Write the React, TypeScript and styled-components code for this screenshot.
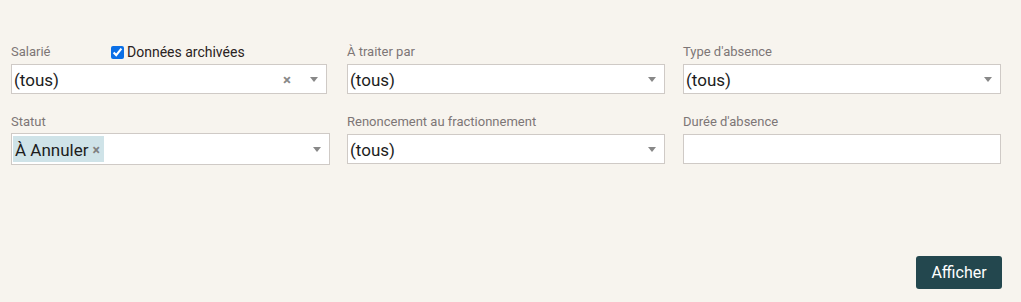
import React from "react";
import styled, { createGlobalStyle } from "styled-components";

const GlobalStyle = createGlobalStyle`
  html, body { margin: 0; padding: 0; background: #f7f4ee; }
  body { font-family: Roboto, "Liberation Sans", sans-serif; }
  * { box-sizing: border-box; }
`;

const Page = styled.div`
  width: 1021px;
  height: 302px;
  padding: 41px 19px 0 11px;
  display: flex;
  flex-direction: column;
`;

const Grid = styled.div`
  display: grid;
  grid-template-columns: 318px 318px 318px;
  column-gap: 18px;
  row-gap: 17px;
  margin-right: 1px;
`;

const Field = styled.div`
  display: flex;
  flex-direction: column;
`;

const LabelRow = styled.div`
  display: flex;
  align-items: center;
  height: 20px;
  padding-top: 2px;
  margin-bottom: 3px;
`;

const Label = styled.span<{ $w?: number }>`
  font-size: 13px;
  color: #7d7676;
  line-height: 18px;
  ${(p) => (p.$w ? `width: ${p.$w}px;` : "")}
`;

const CheckLabel = styled.label`
  display: flex;
  align-items: center;
  gap: 3px;
  font-size: 14px;
  color: #2a2222;
  line-height: 18px;
`;

const Check = styled.input`
  margin: 0;
  width: 13px;
  height: 13px;
  accent-color: #0b6fe6;
`;

const Box = styled.div<{ $w?: number; $h?: number; $mt?: number }>`
  width: ${(p) => (p.$w ? `${p.$w}px` : "100%")};
  height: ${(p) => p.$h ?? 30}px;
  margin-top: ${(p) => p.$mt ?? 0}px;
  background: #fff;
  border: 1px solid #cfcac6;
  display: flex;
  align-items: center;
  padding: 0 8px 0 2px;
  font-size: 17px;
  color: #1c1c1c;
`;

const Value = styled.span`
  flex: 1;
  line-height: 20px;
  padding-top: 2px;
`;

const Clear = styled.span`
  color: #888;
  font-size: 15px;
  font-weight: bold;
  margin-right: 19px;
  padding-top: 2px;
`;

const Arrow = styled.span`
  width: 0;
  height: 0;
  border-left: 4px solid transparent;
  border-right: 4px solid transparent;
  border-top: 5px solid #888;
`;

const TagArea = styled.div`
  flex: 1;
  display: flex;
  align-items: center;
`;

const Tag = styled.span`
  background: #cfe3e8;
  height: 26px;
  display: inline-flex;
  align-items: center;
  padding: 1px 4px 0 2px;
  margin-left: -1px;
  font-size: 17px;
  color: #1c1c1c;
`;

const TagX = styled.span`
  font-size: 14px;
  font-weight: bold;
  color: #808080;
  margin-left: 4px;
`;

const Footer = styled.div`
  display: flex;
  justify-content: flex-end;
  margin-top: 91px;
`;

const Button = styled.button`
  width: 86px;
  height: 33px;
  background: #23474e;
  color: #fff;
  border: none;
  border-radius: 3px;
  font-family: Roboto, "Liberation Sans", sans-serif;
  font-size: 16px;
  padding: 0;
  cursor: pointer;
`;

export default function App() {
  return (
    <>
      <GlobalStyle />
      <Page>
        <Grid>
          <Field>
            <LabelRow>
              <Label $w={100}>Salarié</Label>
              <CheckLabel>
                <Check type="checkbox" defaultChecked />
                Données archivées
              </CheckLabel>
            </LabelRow>
            <Box $w={316}>
              <Value>(tous)</Value>
              <Clear>×</Clear>
              <Arrow />
            </Box>
          </Field>
          <Field>
            <LabelRow>
              <Label>À traiter par</Label>
            </LabelRow>
            <Box>
              <Value>(tous)</Value>
              <Arrow />
            </Box>
          </Field>
          <Field>
            <LabelRow>
              <Label>Type d'absence</Label>
            </LabelRow>
            <Box>
              <Value>(tous)</Value>
              <Arrow />
            </Box>
          </Field>
          <Field>
            <LabelRow>
              <Label>Statut</Label>
            </LabelRow>
            <Box $w={319} $h={32} $mt={-1}>
              <TagArea>
                <Tag>
                  À Annuler<TagX>×</TagX>
                </Tag>
              </TagArea>
              <Arrow />
            </Box>
          </Field>
          <Field>
            <LabelRow>
              <Label>Renoncement au fractionnement</Label>
            </LabelRow>
            <Box>
              <Value>(tous)</Value>
              <Arrow />
            </Box>
          </Field>
          <Field>
            <LabelRow>
              <Label>Durée d'absence</Label>
            </LabelRow>
            <Box />
          </Field>
        </Grid>
        <Footer>
          <Button>Afficher</Button>
        </Footer>
      </Page>
    </>
  );
}
